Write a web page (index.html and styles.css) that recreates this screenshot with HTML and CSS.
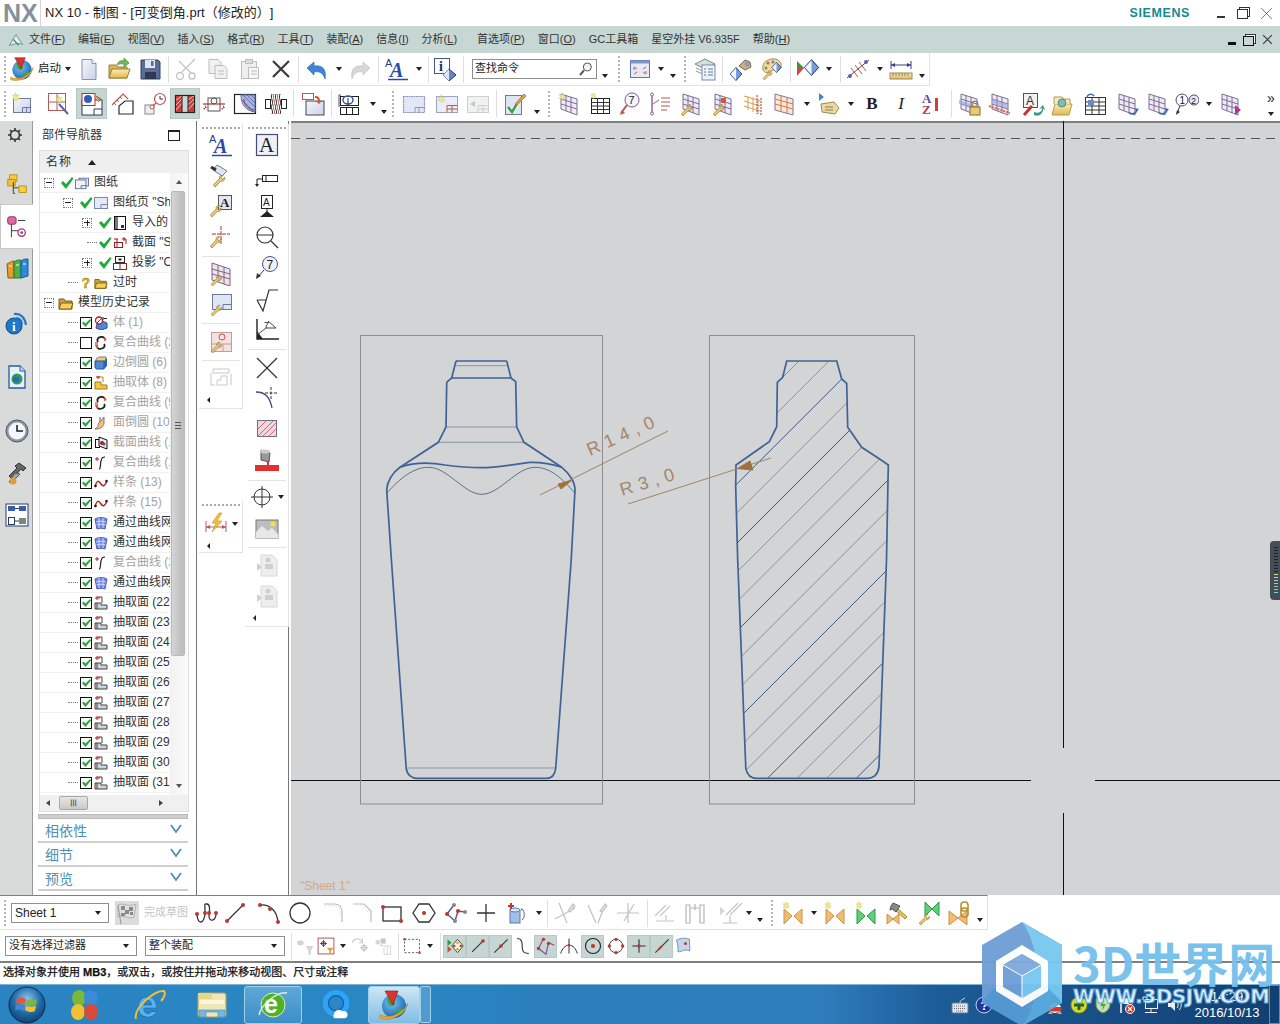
FILE: index.html
```html
<!DOCTYPE html>
<html lang="zh">
<head>
<meta charset="utf-8">
<title>NX 10 - 制图</title>
<link rel="stylesheet" href="styles.css">
</head>
<body>
<svg class="sprite" xmlns="http://www.w3.org/2000/svg">
<defs>
<linearGradient id="gFolder" x1="0" y1="0" x2="0" y2="1"><stop offset="0" stop-color="#fbeeb0"/><stop offset="1" stop-color="#e3b94e"/></linearGradient>
<linearGradient id="gSheet" x1="0" y1="0" x2="1" y2="1"><stop offset="0" stop-color="#f4f6fb"/><stop offset="1" stop-color="#c9d3ea"/></linearGradient>
<radialGradient id="gOrb" cx=".5" cy=".35" r=".7"><stop offset="0" stop-color="#8fc8ec"/><stop offset=".55" stop-color="#1f6aa8"/><stop offset="1" stop-color="#0d3a66"/></radialGradient>
<radialGradient id="gGlobe" cx=".4" cy=".35" r=".7"><stop offset="0" stop-color="#7cc6f2"/><stop offset="1" stop-color="#1560b0"/></radialGradient>
<linearGradient id="gRuler" x1="0" y1="0" x2="0" y2="1"><stop offset="0" stop-color="#fbf2c4"/><stop offset="1" stop-color="#d9b964"/></linearGradient>

<symbol id="wrench" viewBox="0 0 24 24"><path d="M2 21l8-8c-1-3 2-6 5-5l-3 3 2 3 3-3c1 3-2 6-5 5l-8 8z" fill="#ecc973" stroke="#8a6a20" stroke-width=".9"/></symbol>
<symbol id="sheet" viewBox="0 0 24 24"><rect x="3.500" y="6.500" width="17" height="14" fill="url(#gSheet)" stroke="#7078a0"/><path d="M12.500 20.500v-5h8M16.500 15.500v5" fill="none" stroke="#7078a0"/></symbol>
<symbol id="star" viewBox="0 0 24 24"><path d="M8 1l1.500 4 4-1-2 3.500 3 3-4 .2L9 14l-1.500-3.500-4 .5 2.500-3-2.500-3.500 4 1z" fill="#f3ea8a" stroke="#b9b45a" stroke-width=".6"/></symbol>
<symbol id="grid" viewBox="0 0 24 24"><path d="M4 2l16 5v16L4 17z" fill="#efeaf3" stroke="#7a6f98"/><path d="M4 7l16 5M4 12l16 5M9 3.500v15.500M14 5v16" stroke="#7a6f98" fill="none"/></symbol>
<symbol id="new" viewBox="0 0 24 24"><path d="M5 2.500h10l4 4v16H5z" fill="url(#gSheet)" stroke="#8890b8"/><path d="M15 2.500v4h4" fill="#fff" stroke="#8890b8"/></symbol>
<symbol id="open" viewBox="0 0 24 24"><path d="M2 8h7l2 2h9v11H2z" fill="#d9b659" stroke="#98803a"/><path d="M2 21l3-9h18l-3 9z" fill="url(#gFolder)" stroke="#98803a"/><path d="M10 8c1-4 4-5 7-4V1l5 5-5 4V7c-3-.5-5 0-7 1z" fill="#73b85a" stroke="#4a8a3a" stroke-width=".7"/></symbol>
<symbol id="save" viewBox="0 0 24 24"><path d="M3 3h17l2 2v17H3z" fill="#5a6d92" stroke="#33415e"/><rect x="7" y="3" width="10" height="8" fill="#dfe5f1"/><rect x="7" y="15" width="11" height="7" fill="#2e3a55"/><rect x="13" y="4" width="2.500" height="5" fill="#5a6d92"/></symbol>
<symbol id="cut" viewBox="0 0 24 24" fill="none" stroke="#c4c4c4" stroke-width="1.300"><path d="M21 2L8 15M5 4l12 12"/><circle cx="6" cy="19" r="3.500"/><circle cx="18" cy="19" r="3"/></symbol>
<symbol id="copy" viewBox="0 0 24 24" fill="#f1f1f1" stroke="#bdbdbd"><path d="M3 2.500h9l3 3v11H3z"/><path d="M9 8.500h9l3 3v10H9z"/><path d="M12 14h6M12 17h6" /></symbol>
<symbol id="paste" viewBox="0 0 24 24" fill="#eee" stroke="#bdbdbd"><rect x="3.500" y="4.500" width="15" height="17"/><rect x="7.500" y="2.500" width="7" height="4" fill="#ddd"/><path d="M10.500 10.500h10v11h-10z" fill="#f6f6f6"/><path d="M13 14h6M13 17h6"/></symbol>
<symbol id="xmark" viewBox="0 0 24 24"><path d="M4 4l16 16M20 4L4 20" stroke="#3a3a3a" stroke-width="2.200"/></symbol>
<symbol id="undo" viewBox="0 0 24 24"><path d="M2 11l7-6v4c7-1 13 2 11 13-2-6-5-8-11-7v3z" fill="#3d87d6" stroke="#2a5e9e" stroke-width=".6"/></symbol>
<symbol id="redo" viewBox="0 0 24 24"><path d="M22 11l-7-6v4C8 8 2 11 4 22c2-6 5-8 11-7v3z" fill="#d8d8d8" stroke="#bdbdbd" stroke-width=".6"/></symbol>
<symbol id="aa" viewBox="0 0 24 24"><text x="0" y="10" font-family="Liberation Sans" font-size="11" fill="#2d3a8a">A</text><text x="5" y="20" font-family="Liberation Serif" font-size="20" font-style="italic" font-weight="700" fill="#2b47a8">A</text><path d="M3 22.500h20" stroke="#2b47a8" stroke-width="1.500"/></symbol>
<symbol id="info" viewBox="0 0 24 24"><rect x="1.500" y="1.500" width="15" height="15" fill="#fff" stroke="#4a5488"/><text x="6" y="14" font-family="Liberation Serif" font-weight="700" font-size="14" fill="#222a70">i</text><path d="M16 12l7 6-7 6-6-6z" fill="#5f8ac8" stroke="#26346e"/><path d="M16 12v12l-6-6z" fill="#dfe6f3"/></symbol>
<symbol id="fit" viewBox="0 0 24 24"><rect x="2.500" y="3.500" width="19" height="17" fill="#e4ebf7" stroke="#5b74b0"/><path d="M2.500 3.500h19v3h-19z" fill="#7c97cf"/><path d="M6 10l3 2M6 10v3M18 17l-3-2M18 17v-3M18 10l-3 2M6 17l3-2" stroke="#c75a4e" fill="none"/></symbol>
<symbol id="layers" viewBox="0 0 24 24"><path d="M2 7l10-5 10 5-10 5z" fill="#cfe3d9" stroke="#7b8a86"/><path d="M3 11l9 4 9-4M3 14l9 4 9-4" fill="none" stroke="#8b9a96"/><rect x="9" y="8" width="13" height="15" fill="#eef3f6" stroke="#7c8ab0"/><path d="M11 12h2M15 12h5M11 15h2M15 15h5M11 18h2M15 18h5" stroke="#6272a8"/></symbol>
<symbol id="diamond" viewBox="0 0 24 24"><path d="M12 1l10 11-10 11L2 12z" fill="#7a9fd8" stroke="#2a3a78" stroke-width="1.200"/><path d="M12 1v22L2 12z" fill="#f1f4fa"/><path d="M12 1l10 11-10 11L2 12z" fill="none" stroke="#2a3a78"/></symbol>
<symbol id="dpaint" viewBox="0 0 24 24"><use href="#diamond" x="0" y="10" width="14" height="14"/><path d="M10 9l6-6 5 2 1 5-6 3z" fill="#d0b080" stroke="#7a6a50"/><circle cx="18" cy="7" r="2.500" fill="#8a9cc8"/></symbol>
<symbol id="palw" viewBox="0 0 24 24"><path d="M12 2c7-1 11 3 10 8-1 4-5 3-7 3-3 0-3 3-5 3-5 0-7-3-6-7 .5-4 4-6 8-7z" fill="#f0d9a0" stroke="#a88a50"/><circle cx="9" cy="6" r="1.500" fill="#d8554a"/><circle cx="14" cy="5" r="1.500" fill="#4a8ad0"/><circle cx="7" cy="11" r="1.500" fill="#5aa85a"/><use href="#wrench" x="3" y="9" width="14" height="14"/><use href="#diamond" x="12" y="5" width="11" height="11"/></symbol>
<symbol id="pdiamond" viewBox="0 0 24 24"><path d="M1 4l7 7H1z" fill="#2e9a4e"/><path d="M1 11h7l-7 8z" fill="#d8453a"/><use href="#diamond" x="7" y="2" width="17" height="17"/></symbol>
<symbol id="rline" viewBox="0 0 24 24"><path d="M1 21L23 3" stroke="#555" stroke-width="1"/><path d="M5 11l7 9M9 8l7 9M13 5l7 9" stroke="#c3524a"/><circle cx="4" cy="19" r="2" fill="#5a64a8"/><circle cx="20" cy="5" r="2" fill="#5a64a8"/></symbol>
<symbol id="rulerd" viewBox="0 0 24 24"><path d="M2 8h20M2 4v8M22 4v8" stroke="#3a3a90" fill="none"/><path d="M2 8l4-2v4zM22 8l-4-2v4z" fill="#3a3a90"/><rect x="1" y="16" width="22" height="6" fill="url(#gRuler)" stroke="#a08a50"/><path d="M4 16v3M7 16v3M10 16v3M13 16v3M16 16v3M19 16v3" stroke="#8a7a50"/></symbol>
<symbol id="searchi" viewBox="0 0 24 24"><circle cx="14" cy="9" r="6" fill="#f4f4f4" stroke="#555" stroke-width="1.500"/><path d="M9 14l-6 7" stroke="#555" stroke-width="3"/></symbol>

<symbol id="s0" viewBox="0 0 24 24"><path d="M2 20L12 4l10 15c-5-3-9-2-20 1z" fill="#e2f0e4" stroke="#4a6a8a"/><path d="M8 11l8 9" stroke="#2e9a4e" stroke-width="2"/></symbol>
<symbol id="s1" viewBox="0 0 24 24"><use href="#sheet"/><use href="#star" x="0" y="0" width="16" height="16"/></symbol>
<symbol id="s2" viewBox="0 0 24 24"><rect x="1.500" y="1.500" width="17" height="17" fill="#fff" stroke="#b05a5a"/><path d="M10 1.500v17M1.500 10h17" stroke="#b05a5a"/><path d="M12 12l9 10" stroke="#5a64a8" stroke-width="2"/><use href="#star" x="7" y="3" width="14" height="14"/></symbol>
<symbol id="s3" viewBox="0 0 24 24"><rect x="2" y="8" width="20" height="15" fill="#fff" stroke="#2e3a58"/><path d="M14 23v-6h8" stroke="#2e3a58" fill="none"/><rect x="2" y="1.500" width="13" height="12" fill="#fff" stroke="#c02a2a"/><circle cx="8" cy="7" r="4" fill="#2d5fb8"/><path d="M16 4l5 3-3 3" fill="#e0904a" stroke="#a05a2a"/></symbol>
<symbol id="s4" viewBox="0 0 24 24"><path d="M1 13L12 2l5 5" fill="none" stroke="#c2554e" stroke-width="1.200"/><path d="M3 11l2 2M6 8l2 2M9 5l2 2" stroke="#c2554e"/><path d="M8 22V14l6-5h8v13z" fill="#fff" stroke="#2e2e2e" stroke-width="1.200"/></symbol>
<symbol id="s5" viewBox="0 0 24 24"><rect x="2" y="13" width="9" height="9" fill="#eee" stroke="#888"/><circle cx="17" cy="7" r="5.500" fill="#fff" stroke="#c2554e" stroke-width="1.200"/><path d="M17 4v3h3" stroke="#2e2e2e" fill="none"/><path d="M13 11l-5 5" stroke="#c2554e" stroke-width="1.200"/><circle cx="9" cy="15" r="2" fill="#fff" stroke="#c2554e"/></symbol>
<symbol id="s6" viewBox="0 0 24 24"><rect x="2.500" y="3.500" width="19" height="17" fill="#c9d7d5" stroke="#222" stroke-width="1.200"/><rect x="3" y="4" width="6" height="16" fill="#d03a3a"/><rect x="15" y="4" width="6" height="16" fill="#d03a3a"/><path d="M3 8l6-4M3 13l6-6M3 18l6-7M15 8l6-4M15 13l6-6M15 18l6-7" stroke="#fff" stroke-width=".7"/><path d="M9 3.500v17M15 3.500v17" stroke="#222"/></symbol>
<symbol id="s7" viewBox="0 0 24 24"><rect x="6" y="6" width="12" height="13" fill="#fff" stroke="#555"/><circle cx="12" cy="9" r="3" fill="none" stroke="#555"/><path d="M1 12h22" stroke="#a33" stroke-width="1.200"/><path d="M3 13v5l-2-2h4zM21 13v5l-2-2h4z" fill="#c33"/></symbol>
<symbol id="s8" viewBox="0 0 24 24"><rect x="1.500" y="2.500" width="21" height="19" fill="#fff" stroke="#222" stroke-width="1.200"/><path d="M8 3c0 10 5 16 14 17V3z" fill="#a7b6dc" stroke="#6070a8"/><path d="M10 3l12 12M14 3l8 8M9 8l12 12M18 3l4 4" stroke="#6070a8"/><path d="M11 7c0 6 4 10 10 11" fill="none" stroke="#a33"/></symbol>
<symbol id="s9" viewBox="0 0 24 24"><rect x="1.500" y="7.500" width="5" height="9" fill="#fff" stroke="#222"/><rect x="17.500" y="7.500" width="5" height="9" fill="#fff" stroke="#222"/><path d="M8 2c-2 5 2 7 0 11s2 6 0 9M12 2c-2 5 2 7 0 11s2 6 0 9M16 2c-2 5 2 7 0 11s2 6 0 9" fill="none" stroke="#222"/><path d="M10 2c-2 5 2 7 0 11s2 6 0 9M14 2c-2 5 2 7 0 11s2 6 0 9" fill="none" stroke="#b55"/></symbol>
<symbol id="s10" viewBox="0 0 24 24"><rect x="5" y="9" width="18" height="14" fill="url(#gSheet)" stroke="#444"/><rect x="1.500" y="1.500" width="11" height="6" fill="#fff" stroke="#c2554e"/><path d="M14 4c3 0 5 1 5 5h2l-3 3-3-3h2c0-2-1-3-3-3z" fill="#d8553a"/></symbol>
<symbol id="s11" viewBox="0 0 24 24"><path d="M2 15V3M2 3h2" stroke="#555"/><rect x="3.500" y="15.500" width="18" height="7" fill="#fff" stroke="#222"/><path d="M9.500 15.500v7M15.500 15.500v7" stroke="#222"/><rect x="3.500" y="4.500" width="18" height="9" fill="#fff" stroke="#222"/><ellipse cx="11" cy="8" rx="5" ry="4" fill="none" stroke="#3a5aa8" stroke-width="1.500"/><path d="M11 6v7" stroke="#222"/></symbol>
<symbol id="s12" viewBox="0 0 24 24"><rect x="1.500" y="4.500" width="21" height="16" fill="#e2e7f3" stroke="#8d99bd" stroke-width="1.200" stroke-dasharray="2 .5"/><path d="M13 20.500v-5h9.500M17 15.500v5" fill="none" stroke="#8d99bd"/></symbol>
<symbol id="s13" viewBox="0 0 24 24"><rect x="1.500" y="4.500" width="21" height="16" fill="#e9edf6" stroke="#9aa4c0"/><path d="M12 20.500v-7h10.500M12 17h10.500M17 13.500v7" fill="none" stroke="#c2554e"/><use href="#star" x="1" y="2" width="15" height="15"/></symbol>
<symbol id="s14" viewBox="0 0 24 24"><rect x="1.500" y="4.500" width="21" height="16" fill="#f1f1f1" stroke="#cfcfcf"/><path d="M12 20.500v-7h10.500M17 13.500v7M12 17h10.500" fill="none" stroke="#cfcfcf"/><path d="M4 12l5-3v6z" fill="#bfcabf"/></symbol>
<symbol id="s15" viewBox="0 0 24 24"><rect x="2.500" y="3.500" width="16" height="19" fill="#dfe6f3" stroke="#7078a0"/><path d="M5 15l4 5 6-10" fill="none" stroke="#2f9e3f" stroke-width="2.200"/><path d="M13 11l8-9 2 2-9 9-2 .5z" fill="#e8a13a" stroke="#8a5a1a" stroke-width=".6"/></symbol>

<symbol id="t1" viewBox="0 0 24 24"><use href="#grid"/><use href="#star" x="0" y="0" width="14" height="14"/></symbol>
<symbol id="t2" viewBox="0 0 24 24"><rect x="3.500" y="6.500" width="18" height="15" fill="#fff" stroke="#222"/><path d="M3.500 10.500h18M3.500 14h18M3.500 17.500h18M9.500 6.500v15M15.500 6.500v15" stroke="#333"/><use href="#star" x="1" y="0" width="12" height="12"/></symbol>
<symbol id="t3" viewBox="0 0 24 24"><circle cx="14" cy="8" r="7" fill="#f4f4fb" stroke="#7a5a9a"/><text x="10.500" y="12" font-family="Liberation Sans" font-size="11" fill="#222">7</text><path d="M9 13l-6 8" stroke="#c2554e" stroke-width="2"/><path d="M2 23l2-5 3 3z" fill="#c2554e"/></symbol>
<symbol id="t4" viewBox="0 0 24 24"><path d="M4 3v18" stroke="#8a5aa8" stroke-width="1.400"/><circle cx="4" cy="2.500" r="1.500" fill="#fff" stroke="#8a5aa8"/><circle cx="4" cy="21.500" r="1.500" fill="#fff" stroke="#8a5aa8"/><path d="M5 12l6-4" stroke="#c2554e"/><path d="M13 6h9M13 10h9M13 14h9M13 18h6" stroke="#c2554e" stroke-width="1.200"/></symbol>
<symbol id="t5" viewBox="0 0 24 24"><use href="#grid"/><use href="#wrench" x="1" y="7" width="17" height="17"/></symbol>
<symbol id="t6" viewBox="0 0 24 24"><use href="#t5"/><rect x="10" y="6" width="5" height="5" fill="#d8553a"/></symbol>
<symbol id="t7" viewBox="0 0 24 24"><path d="M3 5l15 4v13" fill="none"/><path d="M2 4l16 5M2 9l16 5M2 14l16 5M6 4v14M11 5v15M16 7v15" stroke="#d8a04a"/><path d="M15 3v19M19 6v18" stroke="#a33" stroke-dasharray="2 1"/></symbol>
<symbol id="t8" viewBox="0 0 24 24"><path d="M3 2l18 5v16L3 18z" fill="#f7ebd8" stroke="#8a6fa8"/><path d="M3 7l18 5M3 12l18 5M9 4v15M15 5.500v16" stroke="#d8754a"/></symbol>
<symbol id="t9" viewBox="0 0 24 24"><path d="M3 1l5 4-5 4z" fill="#3a8ac8"/><path d="M5 12l13-2 5 6-4 6-13-2z" fill="#ecd9a0" stroke="#a08a50"/><path d="M9 15h8M9 18h8" stroke="#8a7a50"/></symbol>
<symbol id="t10" viewBox="0 0 24 24"><use href="#grid"/><path d="M2 8l18 6v4L2 12z" fill="#9aa4dc" opacity=".7"/><rect x="13" y="15" width="10" height="8" fill="#ecc973" stroke="#8a6a20"/><path d="M15 15v-3a3 3 0 0 1 6 0v3" fill="none" stroke="#8a6a20"/></symbol>
<symbol id="t11" viewBox="0 0 24 24"><use href="#grid"/><path d="M4 7l16 5v4L4 11z" fill="#9aa4dc" opacity=".7"/><path d="M1 14l21 7" stroke="#d8704a" stroke-width="2" stroke-dasharray="2 1"/></symbol>
<symbol id="t12" viewBox="0 0 24 24"><rect x="2.500" y="1.500" width="14" height="14" fill="#f1f1f1" stroke="#555"/><text x="5" y="13" font-family="Liberation Sans" font-size="12" fill="#333">A</text><path d="M3 23l8-9" stroke="#c2352e" stroke-width="3"/><path d="M13 20c6 2 8-1 8-4l-3 1 4-4 2 5-2-1c0 5-4 8-9 6z" fill="#3a9a8a"/></symbol>
<symbol id="t13" viewBox="0 0 24 24"><path d="M2 23l3-11h17l-3 11z" fill="url(#gFolder)" stroke="#b39a50"/><path d="M4 12V5h8l2 2h6v5" fill="#f5e9bd" stroke="#b39a50"/><circle cx="12" cy="11" r="4" fill="#7cc0a0" stroke="#4a8aa8"/></symbol>
<symbol id="t14" viewBox="0 0 24 24"><rect x="2.500" y="5.500" width="20" height="17" fill="#fff" stroke="#333"/><path d="M2.500 10h20M2.500 14h20M2.500 18h20M9 5.500v17M16 5.500v17" stroke="#333"/><path d="M4 6c0-4 5-5 7-2" fill="none" stroke="#4a6ab0" stroke-width="1.400"/><rect x="5" y="8" width="6" height="5" fill="#6a8ac8"/></symbol>
<symbol id="t15" viewBox="0 0 24 24"><use href="#grid"/><path d="M14 21c4 2 8 0 8-4" fill="none" stroke="#3a6ab0" stroke-width="1.600"/><path d="M20 16l4 1-3 3z" fill="#3a6ab0"/></symbol>
<symbol id="t16" viewBox="0 0 24 24"><circle cx="7" cy="8" r="6" fill="#fff" stroke="#4a4a7a"/><circle cx="19" cy="8" r="5" fill="#e9e9f3" stroke="#4a4a7a"/><text x="4.500" y="12" font-family="Liberation Sans" font-size="10" fill="#222">1</text><text x="16" y="11.500" font-family="Liberation Sans" font-size="9" fill="#222">2</text><path d="M5 14l-3 7" stroke="#333"/><path d="M1 23l1-5 3 2z" fill="#333"/></symbol>
<symbol id="t17" viewBox="0 0 24 24"><use href="#grid"/><path d="M17 13l6 5-6 5z" fill="#b0358a"/></symbol>

<symbol id="flag" viewBox="0 0 24 24"><path d="M3 4c6-3 10 3 18-1l-2 13c-6 3-11-3-16 0z" fill="#e0e0e0" stroke="#b0b0b0"/><path d="M6 5h4v4H6zM14 6h4v4h-4zM10 9h4v4h-4zM6 12h4v3H6zM15 11h3v3h-3z" fill="#8a8a8a"/><path d="M3 4l3 19" stroke="#999"/></symbol>
<symbol id="spl" viewBox="0 0 24 24"><path d="M3 12c0 14 8 10 8 0s-1-9 2-9 3 6 2 12c0 6 7 6 7-3" fill="none" stroke="#333" stroke-width="1.300"/><circle cx="3" cy="13" r="2" fill="#c0352e"/><circle cx="11" cy="12" r="2" fill="#c0352e"/><circle cx="15" cy="12" r="2" fill="#c0352e"/><circle cx="22" cy="12" r="2" fill="#c0352e"/></symbol>
<symbol id="lin" viewBox="0 0 24 24"><path d="M4 20L20 4" stroke="#333" stroke-width="1.300"/><circle cx="4" cy="20" r="2" fill="#c0352e"/><circle cx="20" cy="4" r="2" fill="#c0352e"/></symbol>
<symbol id="arc" viewBox="0 0 24 24"><path d="M3 4c10-1 17 6 18 17" fill="none" stroke="#333" stroke-width="1.300"/><circle cx="3" cy="4" r="2" fill="#c0352e"/><circle cx="13" cy="8" r="2" fill="#c0352e"/><circle cx="21" cy="21" r="2" fill="#c0352e"/></symbol>
<symbol id="cir" viewBox="0 0 24 24"><circle cx="12" cy="12" r="10" fill="none" stroke="#333" stroke-width="1.300"/></symbol>
<symbol id="fil" viewBox="0 0 24 24"><path d="M3 3h10c5 0 8 3 8 8v10" fill="none" stroke="#bbb" stroke-width="1.200"/><path d="M3 5h10c4 0 6 3 6 6v4" fill="none" stroke="#ddd" stroke-dasharray="1 1"/></symbol>
<symbol id="chm" viewBox="0 0 24 24"><path d="M3 3h11l7 7v11" fill="none" stroke="#bbb" stroke-width="1.200"/><path d="M10 3l11 11" stroke="#ddd" stroke-dasharray="1 1"/></symbol>
<symbol id="rct" viewBox="0 0 24 24"><rect x="3" y="6" width="18" height="14" fill="none" stroke="#333" stroke-width="1.300"/><circle cx="3" cy="6" r="2" fill="#c0352e"/><circle cx="21" cy="20" r="2" fill="#c0352e"/></symbol>
<symbol id="hex" viewBox="0 0 24 24"><path d="M7 3h10l6 9-6 9H7l-6-9z" fill="none" stroke="#333" stroke-width="1.300"/><circle cx="12" cy="12" r="2" fill="#c0352e"/></symbol>
<symbol id="pro" viewBox="0 0 24 24"><path d="M10 4l-7 9 8 7 3-10 7 1" fill="none" stroke="#5a5a8a" stroke-width="1.500"/><circle cx="10" cy="4" r="2" fill="#888"/><circle cx="3" cy="13" r="2" fill="#c0352e"/><circle cx="11" cy="20" r="2" fill="#888"/><circle cx="14" cy="10" r="2" fill="#c0352e"/><circle cx="21" cy="11" r="2" fill="#888"/></symbol>
<symbol id="cro" viewBox="0 0 24 24"><path d="M12 3v18M3 12h18" stroke="#333" stroke-width="1.300"/></symbol>
<symbol id="cyl" viewBox="0 0 24 24"><rect x="6" y="9" width="10" height="13" fill="#9fc0e4" stroke="#5a7aa8"/><ellipse cx="11" cy="9" rx="5" ry="2" fill="#d8e6f4" stroke="#5a7aa8"/><path d="M4 5h6M7 2v6" stroke="#c0352e" stroke-width="2"/><path d="M18 8c3 2 3 9 0 11" fill="none" stroke="#5a5aa8"/><path d="M17 8l1-1v3z" fill="#c0352e"/></symbol>
<symbol id="g1" viewBox="0 0 24 24" fill="none" stroke="#c2c2c2" stroke-width="1.200"><path d="M6 2l8 20M22 7L2 18"/><path d="M15 10l5-7 2 2-5 6z" fill="#e5e5e5"/></symbol>
<symbol id="g2" viewBox="0 0 24 24" fill="none" stroke="#c2c2c2" stroke-width="1.200"><path d="M3 4l8 18M20 4l-7 18"/><path d="M15 10l5-7 2 2-5 6z" fill="#e5e5e5"/></symbol>
<symbol id="g3" viewBox="0 0 24 24" fill="none" stroke="#c2c2c2" stroke-width="1.200"><path d="M1 12h22M12 2v20M18 3L8 20"/></symbol>
<symbol id="g4" viewBox="0 0 24 24" fill="none" stroke="#c8c8c8" stroke-width="1.200"><path d="M2 15L13 4M7 15L17 5M3 20h18M13 20v-6"/></symbol>
<symbol id="g5" viewBox="0 0 24 24" fill="none" stroke="#b5b5b5" stroke-width="1.200"><path d="M3 4h4v18H3zM17 4h4v18h-4zM8 7h8M12 3v6"/></symbol>
<symbol id="g6" viewBox="0 0 24 24" fill="none" stroke="#c2c2c2" stroke-width="1.200"><path d="M7 14L19 2M11 14L23 2M4 22h14M11 22v-7"/><path d="M1 6l5 4-5 4z" fill="#d5d5d5" stroke="none"/></symbol>
<symbol id="bow" viewBox="0 0 24 24"><path d="M3 8l8 7-8 8zM21 8l-8 7 8 8z" fill="#f2bb77" stroke="#d09040"/></symbol>
<symbol id="b1" viewBox="0 0 24 24"><use href="#bow"/><use href="#star" x="0" y="0" width="14" height="14"/></symbol>
<symbol id="b3" viewBox="0 0 24 24"><path d="M3 8l8 7-8 8zM21 8l-8 7 8 8z" fill="#5ed07a" stroke="#2a9a4a"/><use href="#star" x="0" y="0" width="14" height="14"/></symbol>
<symbol id="b4" viewBox="0 0 24 24"><path d="M2 13l6 5-6 5zM14 13l-6 5 6 5z" fill="#f2bb77" stroke="#d09040"/><path d="M11 6l11 10-2 2L9 8z" fill="#e8c468" stroke="#a8842a"/><path d="M8 2l7 3-4 6-4-3-2 1 1-4z" fill="#8a8a8a" stroke="#555"/></symbol>
<symbol id="b5" viewBox="0 0 24 24"><path d="M8 1l7 7 7-7v14l-7-7-7 7z" fill="#5ed07a" stroke="#2a9a4a"/><use href="#wrench" x="1" y="8" width="16" height="16"/></symbol>
<symbol id="b6" viewBox="0 0 24 24"><path d="M1 10l9 7-9 7zM19 10l-9 7 9 7z" fill="#f2bb77" stroke="#d09040"/><rect x="13" y="1" width="7" height="9" rx="3" fill="none" stroke="#b8902a" stroke-width="1.600"/><rect x="13" y="7" width="7" height="9" rx="3" fill="none" stroke="#b8902a" stroke-width="1.600"/></symbol>

<symbol id="f1" viewBox="0 0 24 24"><path d="M2 8c2-4 7-4 9 0l-2 3H4z" fill="#d5d5d5"/><path d="M13 12h9l-3 6v4l-3 1v-5z" fill="#d5d5d5"/></symbol>
<symbol id="f2" viewBox="0 0 24 24"><rect x="2.500" y="2.500" width="19" height="19" fill="#fff" stroke="#a03a3a"/><path d="M9 5v8M5 9h8" stroke="#333"/><circle cx="9" cy="9" r="2.500" fill="none" stroke="#333"/><path d="M13 14h8l-3 4v4l-2-1v-3z" fill="#e8a13a"/></symbol>
<symbol id="f3" viewBox="0 0 24 24" fill="none" stroke="#c5c5c5" stroke-width="1.300"><path d="M3 8c1-5 8-6 11-2"/><path d="M12 14h10M17 9v10"/><circle cx="17" cy="14" r="3"/><path d="M15 3v5h-4"/></symbol>
<symbol id="f4" viewBox="0 0 24 24"><rect x="2" y="5" width="5" height="5" fill="#d5d5d5"/><rect x="8" y="3" width="6" height="6" fill="#c5c5c5"/><path d="M12 12h8v10h-8zM16 12v10" fill="none" stroke="#d0d0d0"/><path d="M6 12l3-2 3 2" fill="#d5d5d5"/></symbol>
<symbol id="sel" viewBox="0 0 24 24"><rect x="3" y="4" width="18" height="16" fill="none" stroke="#444" stroke-dasharray="2.500 2"/><circle cx="3" cy="4" r="1.500" fill="#c0352e"/><circle cx="21" cy="20" r="1.500" fill="#c0352e"/></symbol>
<symbol id="sn1" viewBox="0 0 24 24"><path d="M3 4l5 4-5 4z" fill="#2e9a4e"/><path d="M3 12l5 4-5 4z" fill="#d8453a"/><path d="M15 4l7 8-7 8-7-8z" fill="#f4f4d8" stroke="#333"/><circle cx="15" cy="8" r="1.500" fill="#d8a020"/><circle cx="11" cy="12" r="1.500" fill="#c0352e"/><circle cx="19" cy="12" r="1.500" fill="#c0352e"/><circle cx="15" cy="16" r="1.500" fill="#d8a020"/></symbol>
<symbol id="sn2" viewBox="0 0 24 24"><path d="M5 19L19 5" stroke="#333" stroke-width="1.300"/><circle cx="18" cy="6" r="2.200" fill="#c0352e"/></symbol>
<symbol id="sn3" viewBox="0 0 24 24"><path d="M4 20L20 4" stroke="#333" stroke-width="1.300"/><circle cx="12" cy="12" r="2.200" fill="#c0352e"/></symbol>
<symbol id="sn4" viewBox="0 0 24 24"><path d="M5 3c6 0 6 5 6 9s0 9 8 9" fill="none" stroke="#333" stroke-width="1.300"/></symbol>
<symbol id="sn5" viewBox="0 0 24 24"><path d="M9 3l-6 12 9 7 3-14 7 3" fill="none" stroke="#8a4aa8" stroke-width="1.400"/><circle cx="9" cy="4" r="2" fill="#c0352e"/><circle cx="3" cy="15" r="2" fill="#c0352e"/><circle cx="15" cy="9" r="2" fill="#c0352e"/></symbol>
<symbol id="sn6" viewBox="0 0 24 24"><path d="M2 21c2-6 5-10 10-10s8 4 10 10M12 3v18" fill="none" stroke="#333" stroke-width="1.200"/><circle cx="12" cy="11" r="1.500" fill="#c0352e"/></symbol>
<symbol id="sn7" viewBox="0 0 24 24"><circle cx="12" cy="12" r="9" fill="none" stroke="#222" stroke-width="1.300"/><circle cx="12" cy="12" r="2.500" fill="#c0352e"/></symbol>
<symbol id="sn8" viewBox="0 0 24 24"><circle cx="12" cy="12" r="8" fill="none" stroke="#444" stroke-width="1.200"/><circle cx="12" cy="4" r="2" fill="#c0352e"/><circle cx="12" cy="20" r="2" fill="#c0352e"/><circle cx="4" cy="12" r="2" fill="#c0352e"/><circle cx="20" cy="12" r="2" fill="#c0352e"/></symbol>
<symbol id="sn9" viewBox="0 0 24 24"><path d="M4 12h16M12 4v16" stroke="#333" stroke-width="1.300"/><circle cx="12" cy="12" r="2" fill="#c0352e"/></symbol>
<symbol id="sn10" viewBox="0 0 24 24"><path d="M4 20L20 4" stroke="#333" stroke-width="1.300"/><path d="M8 16l4-4" stroke="#c0352e" stroke-width="2.400"/></symbol>
<symbol id="sn11" viewBox="0 0 24 24"><path d="M4 5c6-3 11-3 16-1-1 5 1 10 0 14-6-3-9 1-14 1C6 14 6 9 4 5z" fill="#c4d6ea" stroke="#6a82a8"/><circle cx="15" cy="9" r="1.800" fill="#c0352e"/></symbol>

<symbol id="pw1" viewBox="0 0 24 24"><use href="#wrench" x="2" y="6" width="20" height="18"/><path d="M4 7l4-5 10 6-5 5z" fill="#dfe6f3" stroke="#7078a0"/><path d="M2 4l5 3" stroke="#333" stroke-width="3"/></symbol>
<symbol id="pw2" viewBox="0 0 24 24"><rect x="9.500" y="1.500" width="13" height="14" fill="#e2e7f3" stroke="#555"/><text x="11" y="13" font-family="Liberation Serif" font-size="13" font-weight="700" fill="#222">A</text><use href="#wrench" x="0" y="6" width="17" height="17"/></symbol>
<symbol id="pw3" viewBox="0 0 24 24"><path d="M12 1v18M3 9h18" stroke="#a33" stroke-width="1" stroke-dasharray="4 1"/><use href="#wrench" x="0" y="6" width="17" height="17"/></symbol>
<symbol id="pw4" viewBox="0 0 24 24"><path d="M3 1l18 6v17L3 18z" fill="#efe6dc" stroke="#7a5fa0"/><path d="M3 7l18 5M3 12l18 5M9 3v16M15 5v17" stroke="#7a5fa0"/><use href="#wrench" x="1" y="8" width="16" height="16"/></symbol>
<symbol id="pw5" viewBox="0 0 24 24"><rect x="3.500" y="1.500" width="19" height="15" fill="#dfe6f3" stroke="#7078a0"/><path d="M14 16.500v-5h8.500" fill="none" stroke="#7078a0"/><use href="#wrench" x="1" y="7" width="16" height="16"/></symbol>
<symbol id="pw6" viewBox="0 0 24 24"><rect x="2.500" y="2.500" width="20" height="19" fill="#f5e2e0" stroke="#c79a9a"/><path d="M2.500 14h20M14 14v7.500" stroke="#c79a9a"/><circle cx="13" cy="7" r="3" fill="none" stroke="#c2554e"/><use href="#wrench" x="1" y="7" width="16" height="16"/></symbol>
<symbol id="pd1" viewBox="0 0 24 24" fill="none" stroke="#c8c8c8"><path d="M2 8v12h4M4 4h16v4H4zM8 20h10v-9H12v4H8zM22 9v11"/></symbol>
<symbol id="flash" viewBox="0 0 24 24"><path d="M2 9v11M22 9v11M2 15h20" stroke="#b85a5a"/><path d="M2 15l4-2v4zM22 15l-4-2v4z" fill="#b85a5a"/><path d="M15 1l-7 10h4l-4 9 10-11h-5l5-8z" fill="#f2c232" stroke="#c0902a" stroke-width=".6"/></symbol>
<symbol id="bigA" viewBox="0 0 24 24"><rect x="1.500" y="1.500" width="21" height="21" fill="#eef1f8" stroke="#4a4a7a" stroke-width="1.200"/><text x="4" y="19" font-family="Liberation Serif" font-size="21" fill="#222">A</text></symbol>
<symbol id="leader" viewBox="0 0 24 24"><rect x="7.500" y="7.500" width="15" height="6" fill="#fff" stroke="#222"/><path d="M11 7.500v6" stroke="#222"/><path d="M7 11H2v5" fill="none" stroke="#222"/><path d="M0 16h4l-2 3z" fill="#222"/></symbol>
<symbol id="datum" viewBox="0 0 24 24"><rect x="6.500" y="1.500" width="11" height="13" fill="#fff" stroke="#222"/><text x="8" y="12" font-family="Liberation Sans" font-size="10" fill="#222">A</text><path d="M12 14v4" stroke="#222"/><path d="M5 23l7-6 7 6z" fill="#222"/></symbol>
<symbol id="zoomm" viewBox="0 0 24 24"><circle cx="10" cy="10" r="8" fill="none" stroke="#333" stroke-width="1.200"/><path d="M2 10h16M16 16l7 7" stroke="#333" stroke-width="1.200"/></symbol>
<symbol id="ball7" viewBox="0 0 24 24"><circle cx="15" cy="8" r="7.500" fill="#eef0fa" stroke="#5a4a9a"/><text x="11.500" y="13" font-family="Liberation Sans" font-size="12" fill="#222">7</text><path d="M9 14L2 22" stroke="#333"/><path d="M1 23l1-6 4 3z" fill="#333"/></symbol>
<symbol id="sqrt" viewBox="0 0 24 24"><path d="M2 12l6 11L14 2h9" fill="none" stroke="#333" stroke-width="1.200"/><path d="M2 12h9" stroke="#333"/></symbol>
<symbol id="angl" viewBox="0 0 24 24"><path d="M2 1v20h22" fill="none" stroke="#222" stroke-width="1.400"/><path d="M2 21h6l-6-8z" fill="#222"/><path d="M2 17l9-7 10 0-8-7" fill="none" stroke="#444"/><text x="9" y="10" font-family="Liberation Sans" font-size="9" fill="#222">7</text></symbol>
<symbol id="xl" viewBox="0 0 24 24"><path d="M2 2l20 20M22 2L2 22" stroke="#333" stroke-width="1.200"/></symbol>
<symbol id="fcross" viewBox="0 0 24 24"><path d="M1 6c10 0 14 6 16 16" fill="none" stroke="#444a78" stroke-width="1.300"/><path d="M16 1v12M10 7h12" stroke="#333" stroke-dasharray="3 1.500"/></symbol>
<symbol id="hatch" viewBox="0 0 24 24"><rect x="2.500" y="3.500" width="19" height="16" fill="#eed8dc" stroke="#7a6a8a"/><path d="M3 12l8-8M3 19l15-15M8 19L21 6M14 19l7-7" stroke="#c86a7a"/></symbol>
<symbol id="paint" viewBox="0 0 24 24"><path d="M6 2l9 3-1 9-8-2z" fill="#999" stroke="#555"/><ellipse cx="10" cy="3.500" rx="5" ry="2" fill="#ccc"/><path d="M13 14v3" stroke="#d8352e" stroke-width="2"/><rect x="0" y="17" width="24" height="6" fill="#e03030"/></symbol>
<symbol id="ch" viewBox="0 0 24 24"><circle cx="12" cy="12" r="8" fill="none" stroke="#333"/><path d="M12 1v22M1 12h22" stroke="#333"/></symbol>
<symbol id="imgi" viewBox="0 0 24 24"><rect x="1" y="3" width="22" height="18" fill="#bdbdbd" stroke="#777"/><path d="M1 15l6-6 6 5 4-3 6 6v4H1z" fill="#e8e8e8"/><circle cx="18" cy="7" r="2.500" fill="#f2e24a"/></symbol>
<symbol id="grayd" viewBox="0 0 24 24"><path d="M6 1h11l5 5v16H6z" fill="#eee" stroke="#d8d8d8"/><path d="M2 9l5 4-5 4z" fill="#cfcfcf"/><circle cx="13" cy="6" r="2.500" fill="#cfcfcf"/><rect x="10" y="10" width="8" height="5" fill="#cfcfcf"/></symbol>

<symbol id="ck" viewBox="0 0 14 14"><path d="M1 7l2-2 3 3 6-7 1.500 1.500L6 13z" fill="#23a83a"/></symbol>
<symbol id="box" viewBox="0 0 14 14"><rect x="1.500" y="1.500" width="11" height="11" fill="#fff" stroke="#111"/><path d="M3 7l1.500-1.500 2 2L11 3l1 1.500L6.500 11z" fill="#23a83a"/></symbol>
<symbol id="boxe" viewBox="0 0 14 14"><rect x="1.500" y="1.500" width="11" height="11" fill="#fff" stroke="#111"/></symbol>
<symbol id="tfolder" viewBox="0 0 16 14"><path d="M1 3h5l1 2h7v8H1z" fill="#c9a23a" stroke="#7a5f14"/><path d="M1 13l2-6h12l-2 6z" fill="#f6d05a" stroke="#7a5f14"/></symbol>
<symbol id="tsheets" viewBox="0 0 16 14"><rect x="4.500" y="1.500" width="11" height="9" fill="#dfe6f3" stroke="#5c6a8c"/><rect x=".5" y="3.500" width="12" height="10" fill="#eef2fa" stroke="#5c6a8c"/><path d="M7 13v-3h5.500" fill="none" stroke="#5c6a8c"/></symbol>
<symbol id="tsheet" viewBox="0 0 14 14"><rect x=".5" y="1.500" width="13" height="11" fill="#e4eaf5" stroke="#7c88a8"/><path d="M7 12.500v-4h6.500" fill="none" stroke="#7c88a8"/></symbol>
<symbol id="timp" viewBox="0 0 14 14"><rect x="1.500" y=".5" width="11" height="13" fill="#777" stroke="#111"/><rect x="5" y="1" width="7" height="12" fill="#fff"/><rect x="8" y="9" width="3" height="3" fill="#333"/></symbol>
<symbol id="tsec" viewBox="0 0 14 14"><rect x="1.500" y="6.500" width="8" height="5" fill="none" stroke="#a01818"/><path d="M4 3v8M1 3h4M9 3h4v5M11 1v4" stroke="#a01818" fill="none"/></symbol>
<symbol id="tpro" viewBox="0 0 14 14"><rect x="2.500" y=".5" width="9" height="6" fill="#fff" stroke="#222"/><rect x="5.500" y="2.500" width="3" height="2" fill="#222"/><rect x=".5" y="7.500" width="13" height="6" fill="#fff" stroke="#a01818"/><path d="M7 7.500v6" stroke="#a01818"/></symbol>
<symbol id="tq" viewBox="0 0 12 14"><text x="1.500" y="12" font-family="Liberation Sans" font-weight="700" font-size="14" fill="#e0c010" stroke="#7a6a10" stroke-width=".4">?</text></symbol>
<symbol id="tbody" viewBox="0 0 14 14"><path d="M3 8l5-3 5 2v5l-6 2-5-2z" fill="#4f88d8" stroke="#2a4f8a"/><circle cx="5" cy="4.500" r="3.500" fill="#fff" stroke="#c01818" stroke-width="1.300"/><path d="M3 7l5-5" stroke="#c01818"/><path d="M9 1v3M10 2.500h3" stroke="#222"/></symbol>
<symbol id="tcomp" viewBox="0 0 14 14"><path d="M4 6c-3-5 6-7 7-3M10 8c3 4-6 7-7 3" fill="none" stroke="#222" stroke-width="1.800"/><path d="M10 1l3 3-3 1zM4 13l-3-3 3-1z" fill="#d85a2a"/><path d="M1 7h3M1 9h3" stroke="#c01818"/></symbol>
<symbol id="tedge" viewBox="0 0 14 14"><path d="M2 4c0-2 2-3 4-3h6v3l-2 3H2z" fill="#f5d060" stroke="#6a7aa8"/><path d="M1 5h9v8H3c-1 0-2-1-2-2z" fill="#4f88d8" stroke="#2a4f8a"/><path d="M10 5l3-3v8l-3 3z" fill="#2f62ac"/></symbol>
<symbol id="text1" viewBox="0 0 14 14"><path d="M1 6h6v3h6v4H1z" fill="#f5c840" stroke="#a07a1a"/><path d="M4 1h5v5" fill="none" stroke="#b5851a"/><path d="M2 1h4M4 0v3" stroke="#c01818"/></symbol>
<symbol id="tface" viewBox="0 0 14 14"><path d="M6 1v5" stroke="#5a5a8a"/><path d="M10 1v6c0 4-4 6-8 6h-1c3-2 3-3 3-5z" fill="#f0c46a" stroke="#8a6a9a"/></symbol>
<symbol id="tsecc" viewBox="0 0 14 14"><rect x="1.500" y="3.500" width="4" height="8" fill="#fff" stroke="#111"/><path d="M5 1l8 3v9l-8-3z" fill="#e8e8f2" stroke="#111"/><circle cx="8" cy="7" r="2" fill="#b01818"/><circle cx="10" cy="8" r="1.500" fill="#3a5ab0"/></symbol>
<symbol id="tcurve" viewBox="0 0 14 14"><path d="M5 13c2 0 1-4 2-8s2-4 4-4" fill="none" stroke="#222" stroke-width="1.200"/><path d="M1 3h4M3 1v4" stroke="#c01818"/></symbol>
<symbol id="tspl" viewBox="0 0 14 14"><path d="M1 11c2-8 4-6 6-3s4 2 6-3" fill="none" stroke="#b0231b" stroke-width="1.500"/><circle cx="1.500" cy="10" r="1.300" fill="#222"/><circle cx="12.500" cy="5" r="1.300" fill="#222"/></symbol>
<symbol id="tmesh" viewBox="0 0 14 14"><path d="M1 3c4-2 8-2 12 0l-2 10c-3-1-5-1-8 0z" fill="#6f84e0" stroke="#4a5ec0"/><path d="M2 6c3-1 7-1 10 0M2.500 9c3-1 6-1 9 0M5 2v10M9 2v10" stroke="#e6ecff" stroke-width=".8" fill="none"/></symbol>
<symbol id="texf" viewBox="0 0 14 14"><path d="M1 7h6v2h6v4H1z" fill="#cfd3dc" stroke="#444"/><path d="M4 1h4v6" fill="none" stroke="#444"/><path d="M1 2h5M3 0v4" stroke="#c01818"/><path d="M3 7v6" stroke="#444"/></symbol>
<symbol id="chev" viewBox="0 0 12 10"><path d="M1 1l5 7 5-7" fill="none" stroke="#4f8fb0" stroke-width="1.800"/></symbol>
<symbol id="gear" viewBox="0 0 16 16"><circle cx="8" cy="8" r="4.500" fill="none" stroke="#333" stroke-width="1.600"/><path d="M8 1v3M8 12v3M1 8h3M12 8h3M3 3l2 2M11 11l2 2M13 3l-2 2M5 11l-2 2" stroke="#333" stroke-width="1.600"/></symbol>
<symbol id="tab1" viewBox="0 0 24 28"><path d="M4 3h8v7H4z" fill="#f5d040" stroke="#b8901a"/><path d="M2 8h8v7H2z" fill="#f5c030" stroke="#b8901a"/><path d="M8 11v12h2M8 17h12" stroke="#333" fill="none"/><path d="M14 15h8v7h-8z" fill="#f5d040" stroke="#b8901a"/></symbol>
<symbol id="tab2" viewBox="0 0 24 28"><rect x="2" y="3" width="9" height="8" rx="2" fill="#e26aa0" stroke="#8a2a5a"/><path d="M6 11v14M6 18h7M13 7h8" stroke="#333" fill="none"/><circle cx="17" cy="20" r="4" fill="none" stroke="#a03a7a" stroke-width="1.400"/><circle cx="17" cy="20" r="1.500" fill="#a03a7a"/></symbol>
<symbol id="tab3" viewBox="0 0 24 24"><path d="M2 7c4-2 5-3 7-3l0 17H3z" fill="#ea9a2a" stroke="#8a5a1a"/><path d="M9 5c3-2 4-2 7-2v18H9z" fill="#4fb04a" stroke="#2a7a2a"/><path d="M16 4c3-2 4-2 7-2v17l-7 2z" fill="#2f8ad8" stroke="#1a5a9a"/><path d="M4 9h3M11 8h3M18 7h3" stroke="#fff"/></symbol>
<symbol id="tab4" viewBox="0 0 24 24"><circle cx="9" cy="15" r="8" fill="#1f78c8" stroke="#0f4a8a"/><text x="7" y="20" font-family="Liberation Serif" font-weight="700" font-size="13" fill="#fff">i</text><path d="M9 3c7-1 11 4 12 11M11 7c4 0 6 3 6 6" fill="none" stroke="#1f78c8" stroke-width="2.200"/></symbol>
<symbol id="tab5" viewBox="0 0 24 24"><path d="M4 1h11l5 5v17H4z" fill="#e8f1fb" stroke="#2a5a9a" stroke-width="1.300"/><path d="M15 1v5h5" fill="#cfe0f4" stroke="#2a5a9a"/><circle cx="12" cy="14" r="5.500" fill="#2f9a5a"/><path d="M8 12c3-2 3 2 6 0v5c-2 1-4-1-6 0z" fill="#2a6ac0"/></symbol>
<symbol id="tab6" viewBox="0 0 24 24"><circle cx="12" cy="12" r="11" fill="#8a9aa8" stroke="#4a5a68"/><circle cx="12" cy="12" r="8.500" fill="#f4f7fb"/><path d="M12 6v6h6" fill="none" stroke="#222" stroke-width="1.600"/></symbol>
<symbol id="tab7" viewBox="0 0 24 24"><path d="M14 2l7 5-3 3-2-2-9 10-3-3 8-8-2-2z" fill="#666" stroke="#333"/><path d="M10 12l-6 9c3 2 5 0 6-3l5-5z" fill="#9aa6b8" stroke="#555"/><circle cx="8" cy="20" r="3.500" fill="#d8a040"/></symbol>
<symbol id="tab8" viewBox="0 0 24 24"><rect x="1" y="1" width="22" height="22" fill="#fff" stroke="#2a3a6a"/><rect x="3" y="3" width="7" height="5" fill="#3a5ab0"/><rect x="14" y="3" width="7" height="5" fill="#3a5ab0"/><path d="M10 5.500h4M10 18h4" stroke="#2a3a6a"/><rect x="3.500" y="14.500" width="6" height="7" fill="#fff" stroke="#2a3a6a"/><rect x="14" y="15" width="7" height="6" fill="#7a8a7a"/></symbol>

<symbol id="logo" viewBox="0 0 32 32"><circle cx="16" cy="17" r="12" fill="url(#gGlobe)"/><path d="M9 9c4-1 7 1 8 4s-3 5-5 4-3-4-3-8zM20 20c3-1 6 0 6 2-1 3-4 5-6 4s-2-4 0-6z" fill="#3aa84a"/><path d="M2 26c8 4 22 0 28-12-3 12-18 19-28 15z" fill="#f0a830" stroke="#b8781a" stroke-width=".6"/><path d="M7 2h13l-5 14z" fill="#d8352e" stroke="#8a1a1a" stroke-width=".6"/></symbol>
<symbol id="orb" viewBox="0 0 38 38"><circle cx="19" cy="19" r="18" fill="url(#gOrb)" stroke="#0c2d4f"/><path d="M9 13c3-2 6-2 9 0l-1 5c-3-1-6-1-9 0z" fill="#e8553a"/><path d="M19 13c3 2 6 2 10 0l-1 6c-3 1-7 1-10-1z" fill="#7ab83a"/><path d="M8 19c3-1 6-1 9 0l-1 5c-3-1-6-1-9 1z" fill="#3a8ad8"/><path d="M18 20c3 1 6 1 10 0l-1 5c-3 2-7 1-10-1z" fill="#f2c030"/></symbol>
<symbol id="tb360" viewBox="0 0 32 32"><ellipse cx="10" cy="9" rx="7" ry="8" fill="#7ab83a"/><ellipse cx="22" cy="9" rx="7" ry="8" fill="#3a8ad8"/><ellipse cx="9" cy="23" rx="7" ry="8" fill="#f2c030"/><ellipse cx="22" cy="23" rx="7" ry="8" fill="#d84a3a"/></symbol>
<symbol id="tbie" viewBox="0 0 32 32"><text x="3" y="28" font-family="Liberation Sans" font-weight="700" font-size="37" fill="#58b4ee" stroke="#1a6ab0" stroke-width=".6">e</text><path d="M2 30C-1 20 20 1 30 2c2 2 0 7-3 10" fill="none" stroke="#f2c030" stroke-width="2"/></symbol>
<symbol id="tbfolder" viewBox="0 0 32 28"><rect x="2" y="2" width="28" height="24" rx="2" fill="#f0e6b8" stroke="#b8a050"/><rect x="2" y="2" width="14" height="6" fill="#e8d48a"/><rect x="4" y="9" width="24" height="4" fill="#fdf8dc"/><path d="M3 26v-7h26v7h-7v-5H10v5z" fill="#74b8e0" stroke="#4a8ab0" stroke-width=".6"/></symbol>
<symbol id="tbge" viewBox="0 0 32 32"><circle cx="16" cy="16" r="12" fill="#4fb02a" stroke="#d8f0b8"/><text x="7" y="24" font-family="Liberation Sans" font-weight="700" font-size="25" fill="#fff">e</text><path d="M2 26C4 16 20 2 30 4" fill="none" stroke="#e0f0c8" stroke-width="1.500"/></symbol>
<symbol id="tbq" viewBox="0 0 32 36"><circle cx="16" cy="16" r="12" fill="none" stroke="#30a4f4" stroke-width="6"/><circle cx="16" cy="16" r="8.500" fill="none" stroke="#0f62b8" stroke-width="1.500"/><path d="M14 28c0-4 6-6 9-3 3-1 6 1 6 4s-2 4-4 4H16c-3 0-4-3-2-5z" fill="#fff"/></symbol>
<symbol id="tray1" viewBox="0 0 18 18"><rect x="1" y="7" width="16" height="10" rx="1" fill="#dfe6ee" stroke="#6a7a8a"/><path d="M3 10h12M3 12.500h12M5 15h8" stroke="#667" stroke-dasharray="1 1"/><path d="M9 7c0-3 2-3 5-5" fill="none" stroke="#ccd"/></symbol>
<symbol id="tray2" viewBox="0 0 18 18"><circle cx="9" cy="9" r="8" fill="#1d3a9a" stroke="#c8d4f0"/><text x="5.500" y="13.500" font-family="Liberation Sans" font-weight="700" font-size="12" fill="#fff">?</text></symbol>
<symbol id="tray3" viewBox="0 0 18 18"><ellipse cx="9" cy="6.500" rx="5" ry="5.500" fill="#222"/><ellipse cx="9" cy="12" rx="6" ry="5" fill="#fff"/><path d="M3 11l12 0 1 3c-4 2-10 2-14 0z" fill="#d8352e"/><path d="M4 15l-2 3h5zM14 15l2 3h-5z" fill="#f0a830"/></symbol>
<symbol id="tray4" viewBox="0 0 18 18"><circle cx="9" cy="9" r="8" fill="#d8d82a" stroke="#8a9a1a"/><path d="M9 4v10M4 9h10" stroke="#1f6a1a" stroke-width="3"/></symbol>
<symbol id="tray5" viewBox="0 0 18 18"><path d="M9 1l7 2v6c0 4-4 7-7 8-3-1-7-4-7-8V3z" fill="#c8e0b0" stroke="#5a8a4a"/><path d="M10 3L6 10h3l-1 5 4-7H9z" fill="#3fae3a"/></symbol>
<symbol id="tray6" viewBox="0 0 18 18"><path d="M3 1v16" stroke="#fff" stroke-width="1.500"/><path d="M3 2c3-1 5 1 8 0v6c-3 1-5-1-8 0z" fill="#f4f4f4"/><circle cx="12" cy="13" r="4.500" fill="#d8352e" stroke="#fff"/><path d="M10 11l4 4M14 11l-4 4" stroke="#fff" stroke-width="1.300"/></symbol>
<symbol id="tray7" viewBox="0 0 18 18"><rect x="3.500" y="3.500" width="12" height="9" fill="#1a4a80" stroke="#f0f0f0"/><path d="M9 13v3M3 16.500h12M1 1h4v3H1z" stroke="#f0f0f0" fill="none"/></symbol>
<symbol id="tray8" viewBox="0 0 18 18"><path d="M2 7h3l4-4v12l-4-4H2z" fill="#e8eef4"/><path d="M11 6c1.500 1.500 1.500 4.500 0 6M13 4c3 3 3 7 0 10" fill="none" stroke="#e8eef4"/></symbol>
</defs>
</svg>

<div class="app">
  <header class="titlebar">
    <span class="nx">NX</span>
    <span class="title">NX 10 - 制图 - [可变倒角.prt（修改的）]</span>
    <span class="siemens">SIEMENS</span>
    <span class="winctl"><b class="wmin"></b><b class="wmax"></b><svg class="wclose"><use href="#xl"/></svg></span>
  </header>

  <nav class="menubar">
    <svg class="mico"><use href="#s0"/></svg>
    <span>文件(<u>F</u>)</span><span>编辑(<u>E</u>)</span><span>视图(<u>V</u>)</span><span>插入(<u>S</u>)</span><span>格式(<u>R</u>)</span><span>工具(<u>T</u>)</span><span>装配(<u>A</u>)</span><span>信息(<u>I</u>)</span><span class="mgap">分析(<u>L</u>)</span><span>首选项(<u>P</u>)</span><span>窗口(<u>O</u>)</span><span>GC工具箱</span><span>星空外挂 V6.935F</span><span>帮助(<u>H</u>)</span>
    <span class="docctl"><b class="wmin"></b><b class="wmax"></b><svg class="wclose bold"><use href="#xmark"/></svg></span>
  </nav>

  <div class="tb row1">
    <i class="grip"></i><svg><use href="#logo"/></svg><span class="tbtext">启动</span><i class="dd"></i>
    <svg><use href="#new"/></svg><svg><use href="#open"/></svg><svg><use href="#save"/></svg><i class="sep"></i>
    <svg><use href="#cut"/></svg><svg><use href="#copy"/></svg><svg><use href="#paste"/></svg><svg><use href="#xmark"/></svg><i class="sep"></i>
    <svg><use href="#undo"/></svg><i class="dd"></i><svg><use href="#redo"/></svg><i class="sep"></i>
    <svg><use href="#aa"/></svg><i class="dd"></i><i class="sep"></i><svg><use href="#info"/></svg><i class="sep"></i><i></i>
    <div class="searchbox"><span>查找命令</span><svg><use href="#searchi"/></svg></div>
    <i class="dd low"></i><i class="grip"></i><svg><use href="#fit"/></svg><i class="dd"></i><i class="dd low"></i><i class="grip"></i>
    <svg><use href="#layers"/></svg><i class="sep"></i><svg><use href="#dpaint"/></svg><svg><use href="#palw"/></svg><i class="sep"></i>
    <svg><use href="#pdiamond"/></svg><i class="dd"></i><i class="sep"></i><svg><use href="#rline"/></svg><i class="dd"></i><svg><use href="#rulerd"/></svg><i class="dd low"></i>
  </div>

  <div class="tb row2">
    <i class="grip"></i><svg><use href="#s1"/></svg><i></i><svg><use href="#s2"/></svg><i></i>
    <span class="on"><svg><use href="#s3"/></svg></span><svg><use href="#s4"/></svg><svg><use href="#s5"/></svg>
    <span class="on"><svg><use href="#s6"/></svg></span><svg><use href="#s7"/></svg><svg><use href="#s8"/></svg><svg><use href="#s9"/></svg><i class="sep"></i>
    <svg><use href="#s10"/></svg><i class="sep"></i><svg><use href="#s11"/></svg><i class="dd"></i><i class="dd low"></i><i class="grip"></i>
    <svg><use href="#s12"/></svg><svg><use href="#s13"/></svg><svg><use href="#s14"/></svg><i class="sep"></i><svg><use href="#s15"/></svg><i class="dd low"></i><i class="grip"></i>
    <svg><use href="#t1"/></svg><svg><use href="#t2"/></svg><svg><use href="#t3"/></svg><svg><use href="#t4"/></svg><svg><use href="#t5"/></svg><svg><use href="#t6"/></svg><svg><use href="#t7"/></svg><svg><use href="#t8"/></svg><i class="dd"></i>
    <svg><use href="#t9"/></svg><i class="dd"></i><b class="fmt">B</b><em class="fmt">I</em>
    <span class="azs"><span class="aza">A</span><br>Z<i class="azarrow"></i></span><i class="sep"></i>
    <svg><use href="#t10"/></svg><svg><use href="#t11"/></svg><svg><use href="#t12"/></svg><svg><use href="#t13"/></svg><svg><use href="#t14"/></svg><svg><use href="#t15"/></svg><svg><use href="#t15"/></svg><svg><use href="#t16"/></svg><i class="dd"></i><svg><use href="#t17"/></svg><i></i>
    <span class="overflow">»<i class="dd"></i></span>
  </div>

  <main class="work">
    <aside class="tabs">
      <svg class="gear"><use href="#gear"/></svg>
      <svg class="tabi"><use href="#tab1"/></svg>
      <span class="tabsel"><svg class="tabi"><use href="#tab2"/></svg></span>
      <svg class="tabi"><use href="#tab3"/></svg>
      <svg class="tabi"><use href="#tab4"/></svg>
      <svg class="tabi"><use href="#tab5"/></svg>
      <svg class="tabi"><use href="#tab6"/></svg>
      <svg class="tabi"><use href="#tab7"/></svg>
      <svg class="tabi"><use href="#tab8"/></svg>
    </aside>

    <section class="nav">
      <div class="navhead"><span>部件导航器</span><b class="navmax"></b></div>
      <div class="navtable">
        <div class="tablehead"><span>名称</span><i class="sortup"></i></div>
        <div class="treewrap">
          <div class="tree">
            <i class="guide g1"></i><i class="guide g2"></i><i class="guide g3"></i>
            <div class="r l0"><i class="exp minus"></i><svg class="tk"><use href="#ck"/></svg><svg class="ti"><use href="#tsheets"/></svg><span>图纸</span></div>
            <div class="r l1"><i class="exp minus"></i><svg class="tk"><use href="#ck"/></svg><svg class="ti"><use href="#tsheet"/></svg><span>图纸页 "Sheet 1"</span></div>
            <div class="r l2"><i class="exp plus"></i><svg class="tk"><use href="#ck"/></svg><svg class="ti"><use href="#timp"/></svg><span>导入的 "TOP"</span></div>
            <div class="r l2"><i class="lead"></i><svg class="tk"><use href="#ck"/></svg><svg class="ti"><use href="#tsec"/></svg><span>截面 "SX@1"</span></div>
            <div class="r l2"><i class="exp plus"></i><svg class="tk"><use href="#ck"/></svg><svg class="ti"><use href="#tpro"/></svg><span>投影 "ORTHO"</span></div>
            <div class="r l1"><i class="lead"></i><svg class="tk"><use href="#tq"/></svg><svg class="ti"><use href="#tfolder"/></svg><span>过时</span></div>
            <div class="r l0 hist"><i class="exp minus"></i><svg class="ti"><use href="#tfolder"/></svg><span>模型历史记录</span></div>
            <div class="r l1 off"><i class="lead"></i><svg class="tk"><use href="#box"/></svg><svg class="ti"><use href="#tbody"/></svg><span>体 (1)</span></div>
            <div class="r l1 off"><i class="lead"></i><svg class="tk"><use href="#boxe"/></svg><svg class="ti"><use href="#tcomp"/></svg><span>复合曲线 (2)</span></div>
            <div class="r l1 off"><i class="lead"></i><svg class="tk"><use href="#box"/></svg><svg class="ti"><use href="#tedge"/></svg><span>边倒圆 (6)</span></div>
            <div class="r l1 off"><i class="lead"></i><svg class="tk"><use href="#box"/></svg><svg class="ti"><use href="#text1"/></svg><span>抽取体 (8)</span></div>
            <div class="r l1 off"><i class="lead"></i><svg class="tk"><use href="#box"/></svg><svg class="ti"><use href="#tcomp"/></svg><span>复合曲线 (9)</span></div>
            <div class="r l1 off"><i class="lead"></i><svg class="tk"><use href="#box"/></svg><svg class="ti"><use href="#tface"/></svg><span>面倒圆 (10)</span></div>
            <div class="r l1 off"><i class="lead"></i><svg class="tk"><use href="#box"/></svg><svg class="ti"><use href="#tsecc"/></svg><span>截面曲线 (11)</span></div>
            <div class="r l1 off"><i class="lead"></i><svg class="tk"><use href="#box"/></svg><svg class="ti"><use href="#tcurve"/></svg><span>复合曲线 (12)</span></div>
            <div class="r l1 off"><i class="lead"></i><svg class="tk"><use href="#box"/></svg><svg class="ti"><use href="#tspl"/></svg><span>样条 (13)</span></div>
            <div class="r l1 off"><i class="lead"></i><svg class="tk"><use href="#box"/></svg><svg class="ti"><use href="#tspl"/></svg><span>样条 (15)</span></div>
            <div class="r l1"><i class="lead"></i><svg class="tk"><use href="#box"/></svg><svg class="ti"><use href="#tmesh"/></svg><span>通过曲线网格 (16)</span></div>
            <div class="r l1"><i class="lead"></i><svg class="tk"><use href="#box"/></svg><svg class="ti"><use href="#tmesh"/></svg><span>通过曲线网格 (17)</span></div>
            <div class="r l1 off"><i class="lead"></i><svg class="tk"><use href="#box"/></svg><svg class="ti"><use href="#tcurve"/></svg><span>复合曲线 (20)</span></div>
            <div class="r l1"><i class="lead"></i><svg class="tk"><use href="#box"/></svg><svg class="ti"><use href="#tmesh"/></svg><span>通过曲线网格 (21)</span></div>
            <div class="r l1"><i class="lead"></i><svg class="tk"><use href="#box"/></svg><svg class="ti"><use href="#texf"/></svg><span>抽取面 (22)</span></div>
            <div class="r l1"><i class="lead"></i><svg class="tk"><use href="#box"/></svg><svg class="ti"><use href="#texf"/></svg><span>抽取面 (23)</span></div>
            <div class="r l1"><i class="lead"></i><svg class="tk"><use href="#box"/></svg><svg class="ti"><use href="#texf"/></svg><span>抽取面 (24)</span></div>
            <div class="r l1"><i class="lead"></i><svg class="tk"><use href="#box"/></svg><svg class="ti"><use href="#texf"/></svg><span>抽取面 (25)</span></div>
            <div class="r l1"><i class="lead"></i><svg class="tk"><use href="#box"/></svg><svg class="ti"><use href="#texf"/></svg><span>抽取面 (26)</span></div>
            <div class="r l1"><i class="lead"></i><svg class="tk"><use href="#box"/></svg><svg class="ti"><use href="#texf"/></svg><span>抽取面 (27)</span></div>
            <div class="r l1"><i class="lead"></i><svg class="tk"><use href="#box"/></svg><svg class="ti"><use href="#texf"/></svg><span>抽取面 (28)</span></div>
            <div class="r l1"><i class="lead"></i><svg class="tk"><use href="#box"/></svg><svg class="ti"><use href="#texf"/></svg><span>抽取面 (29)</span></div>
            <div class="r l1"><i class="lead"></i><svg class="tk"><use href="#box"/></svg><svg class="ti"><use href="#texf"/></svg><span>抽取面 (30)</span></div>
            <div class="r l1"><i class="lead"></i><svg class="tk"><use href="#box"/></svg><svg class="ti"><use href="#texf"/></svg><span>抽取面 (31)</span></div>
          </div>
          <div class="vscroll"><i class="aup"></i><b class="vthumb"><i class="ridges"></i></b><i class="adown"></i></div>
        </div>
        <div class="hscroll"><i class="aleft"></i><b class="hthumb">Ⅲ</b><i class="aright"></i></div>
      </div>
      <div class="splitter"></div>
      <div class="acc"><span>相依性</span><svg><use href="#chev"/></svg></div>
      <div class="acc"><span>细节</span><svg><use href="#chev"/></svg></div>
      <div class="acc"><span>预览</span><svg><use href="#chev"/></svg></div>
    </section>

    <section class="pal">
      <div class="palbox pa">
        <i class="pgrip"></i>
        <svg><use href="#aa"/></svg><svg><use href="#pw1"/></svg><svg><use href="#pw2"/></svg><svg><use href="#pw3"/></svg>
        <i class="hsep"></i>
        <svg><use href="#pw4"/></svg><svg><use href="#pw5"/></svg>
        <i class="hsep"></i>
        <svg><use href="#pw6"/></svg>
        <i class="hsep"></i>
        <svg><use href="#pd1"/></svg>
        <i class="more"></i>
      </div>
      <div class="palbox pb">
        <i class="pgrip"></i>
        <span class="wdd"><svg><use href="#flash"/></svg><i class="dd"></i></span>
        <i class="more"></i>
      </div>
    </section>
    <section class="pal pal2">
      <div class="palbox pc">
        <i class="pgrip"></i>
        <svg><use href="#bigA"/></svg><i></i><svg><use href="#leader"/></svg><svg><use href="#datum"/></svg><svg><use href="#zoomm"/></svg><svg><use href="#ball7"/></svg><svg><use href="#sqrt"/></svg><svg><use href="#angl"/></svg>
        <i class="hsep"></i>
        <svg><use href="#xl"/></svg><svg><use href="#fcross"/></svg><svg><use href="#hatch"/></svg><svg><use href="#paint"/></svg>
        <i class="hsep"></i>
        <span class="wdd"><svg><use href="#ch"/></svg><i class="dd"></i></span><svg><use href="#imgi"/></svg>
        <i class="hsep"></i>
        <svg><use href="#grayd"/></svg><svg><use href="#grayd"/></svg>
        <i class="more"></i>
      </div>
    </section>

    <section class="canvas">
      <svg class="draw" viewBox="291 121 989 774" xmlns="http://www.w3.org/2000/svg">
        <defs>
          <clipPath id="cutaway"><path d="M786.700 361H836.700L841.700 379 846.700 383.300 847.700 427.300 861.700 447.300 880 459.300 888.300 465 886.500 560 879 766.700C878 775 873 778.300 867.200 778.300H757C751 778.300 747 775 745.800 768.300L737.700 560 735.700 486.700 736 465 769.300 441.700 776.700 426.700 777.300 382.300 782.700 377.300z"/></clipPath>
        </defs>
        <path class="topline" d="M291 122H1280"/>
        <path class="dash" d="M291 138.500H1280"/>
        <path class="axis" d="M1063.500 121V748M1063.500 813V895M291 780.500H1031M1095 780.500H1280"/>
        <rect class="frame" x="360.500" y="335.500" width="242" height="468.500"/>
        <rect class="frame" x="709.500" y="335.500" width="205" height="468.500"/>
        <g class="thin">
          <path d="M456 365.700H506.700M446 427H516.700M438.300 442.300H524M406 768H556"/>
          <path class="wave" d="M386.700 493.300C400 478 414 467.300 428.300 467.300 448 467.300 464 494.300 481.700 494.300 500 494.300 516 467.300 535 467.300 550 467.300 562 478 575 493.300"/>
        </g>
        <g class="thick">
          <path d="M456 361H506.700M456 361L451.700 378H511L506.700 361M451.700 378L447.300 381.700 446.700 383 446 427 438.300 442.300 400 467.300C392 473 387 482 386.700 490L391.400 560 406.200 768.300C407 775 412 778.300 417.300 778.300H546C552 778.300 555 775 555.700 768.300L571.200 560 575 490C575 482 569 473 561.700 467.300L524 442.300 516.700 427 515.700 381.700 511 378"/>
          <path d="M400 467.300C412 463 428 462 445 465 460 467 470 467.700 481.700 467.700 495 467.700 510 465 530 462.300 545 462 555 465 561.700 467.300"/>
        </g>
        <g clip-path="url(#cutaway)" class="hatchlines">
          <path class="hg" d="M820 340L340 820M850 340L360 830"/>
          <path class="hb" d="M880.800 340L340 880.800"/>
          <path class="hg" d="M909.700 340L340 909.700"/>
          <path class="hb" d="M940 340L340 940"/>
          <path class="hg" d="M969 340L340 969M998.600 340L340 998.600"/>
          <path class="hb" d="M1028 340L340 1028"/>
          <path class="hg" d="M1057.800 340L340 1057.800M1087.400 340L340 1087.400"/>
          <path class="hb" d="M1117 340L340 1117"/>
          <path class="hg" d="M1146.600 340L340 1146.600M1176.200 340L340 1176.200"/>
          <path class="hb" d="M1205.800 340L340 1205.800"/>
          <path class="hg" d="M1235.400 340L340 1235.400M1265 340L340 1265"/>
          <path class="hb" d="M1294.600 340L340 1294.600"/>
        </g>
        <path class="thick" d="M786.700 361H836.700L841.700 379 846.700 383.300 847.700 427.300 861.700 447.300 880 459.300 888.300 465 886.500 560 879 766.700C878 775 873 778.300 867.200 778.300H757C751 778.300 747 775 745.800 768.300L737.700 560 735.700 486.700 736 465 769.300 441.700 776.700 426.700 777.300 382.300 782.700 377.300z"/>
        <g class="dim">
          <path d="M668 431L540 495M771 458L628 504"/>
          <path class="arrow" d="M571.500 480.500L558 484 561 489zM737.500 468.500L750 461 753 470z"/>
          <text class="dimt" transform="translate(590 456) rotate(-24)">R14,0</text>
          <text class="dimt" transform="translate(622 496) rotate(-17)">R3,0</text>
        </g>
        <text class="sheetname" x="300" y="890">"Sheet 1"</text>
      </svg>
      <div class="handle"><i></i></div>
    </section>
  </main>

  <div class="tb row3">
    <i class="grip"></i>
    <div class="select"><span>Sheet 1</span><i class="dd"></i></div>
    <span class="flagwrap"><svg><use href="#flag"/></svg></span>
    <span class="graytext">完成草图</span>
    <svg><use href="#spl"/></svg><svg><use href="#lin"/></svg><svg><use href="#arc"/></svg><svg><use href="#cir"/></svg><svg><use href="#fil"/></svg><svg><use href="#chm"/></svg><svg><use href="#rct"/></svg><svg><use href="#hex"/></svg><svg><use href="#pro"/></svg><svg><use href="#cro"/></svg><svg><use href="#cyl"/></svg><i class="dd"></i><i class="sep"></i>
    <svg><use href="#g1"/></svg><svg><use href="#g2"/></svg><svg><use href="#g3"/></svg><i class="sep"></i><svg><use href="#g4"/></svg><svg><use href="#g5"/></svg><svg><use href="#g6"/></svg><i class="dd"></i><i class="dd low"></i><i class="grip"></i>
    <svg><use href="#b1"/></svg><i class="dd"></i><svg><use href="#b1"/></svg><svg><use href="#b3"/></svg><svg><use href="#b4"/></svg><svg><use href="#b5"/></svg><svg><use href="#b6"/></svg><i class="dd low"></i>
  </div>

  <div class="tb row4">
    <i></i>
    <div class="select"><span>没有选择过滤器</span><i class="dd"></i></div><i></i>
    <div class="select"><span>整个装配</span><i class="dd"></i></div><i class="sep"></i>
    <svg><use href="#f1"/></svg><svg><use href="#f2"/></svg><i class="dd"></i><svg><use href="#f3"/></svg><svg><use href="#f4"/></svg><i class="sep"></i>
    <svg><use href="#sel"/></svg><i class="dd"></i><i class="sep"></i>
    <span class="on"><svg><use href="#sn1"/></svg></span><span class="on"><svg><use href="#sn2"/></svg></span><span class="on"><svg><use href="#sn3"/></svg></span>
    <svg><use href="#sn4"/></svg>
    <span class="on"><svg><use href="#sn5"/></svg></span>
    <svg><use href="#sn6"/></svg>
    <span class="on"><svg><use href="#sn7"/></svg></span>
    <svg><use href="#sn8"/></svg>
    <span class="on"><svg><use href="#sn9"/></svg></span><span class="on"><svg><use href="#sn10"/></svg></span>
    <svg><use href="#sn11"/></svg>
  </div>

  <div class="status">选择对象并使用 <b>MB3</b>，或双击，或按住并拖动来移动视图、尺寸或注释</div>

  <footer class="taskbar">
    <svg class="orb"><use href="#orb"/></svg>
    <svg class="tbi"><use href="#tb360"/></svg>
    <svg class="tbi"><use href="#tbie"/></svg>
    <svg class="tbi"><use href="#tbfolder"/></svg>
    <span class="task act"><svg class="tbi"><use href="#tbge"/></svg></span>
    <svg class="tbi"><use href="#tbq"/></svg>
    <span class="task act two"><svg class="tbi"><use href="#logo"/></svg></span>
    <span class="tbspace"></span>
    <svg class="tray"><use href="#tray1"/></svg>
    <svg class="tray"><use href="#tray2"/></svg>
    <span class="tray up"></span>
    <svg class="tray"><use href="#tray3"/></svg>
    <svg class="tray"><use href="#tray4"/></svg>
    <svg class="tray"><use href="#tray5"/></svg>
    <svg class="tray"><use href="#tray6"/></svg>
    <svg class="tray"><use href="#tray7"/></svg>
    <svg class="tray"><use href="#tray8"/></svg>
    <span class="clock">14:29<br>2016/10/13</span>
    <span class="showdesk"></span>
  </footer>
</div>

<div class="watermark">
  <svg class="wmhex" viewBox="0 0 84 106">
    <path d="M42 1L82 24V82L42 105 2 82V24z" fill="#6f9fd6"/>
    <path d="M42 1L82 24V82L42 105C62 80 62 28 42 1z" fill="#78c8f0"/>
    <path d="M2 82C12 62 40 50 60 62 72 70 78 76 82 82L42 105z" fill="#3f96d0" opacity=".55"/>
    <path d="M42 24L68 40V70L42 86 16 70V40z" fill="#fff"/>
    <path d="M42 33L61 44V66L42 77 23 66V44z" fill="#6f9fd6"/>
    <path d="M42 55L61 44V66L42 77z" fill="#78c8f0"/>
    <path d="M42 33L61 44 42 55 23 44z" fill="#7fa9dc"/>
    <path d="M42 55V77M42 55L61 44M42 55L23 44" stroke="#fff" stroke-width="1" fill="none"/>
  </svg>
  <div class="wmtext">
    <span class="wmbig">3D世界网</span>
    <span class="wmurl">WWW.3DSJW.COM</span>
  </div>
</div>
</body>
</html>
```

FILE: styles.css
```css
* { box-sizing: border-box; }
html, body { margin: 0; padding: 0; width: 1280px; height: 1024px; overflow: hidden; background: #fff; }
body { font: 12px/1.2 "Liberation Sans", "Noto Sans CJK SC", sans-serif; color: #222; position: relative; text-spacing-trim: space-all; }
i, em { font-style: normal; }
.sprite { position: absolute; width: 0; height: 0; overflow: hidden; }
.app { display: flex; flex-direction: column; height: 1024px; }

/* title */
.titlebar { height: 26px; display: flex; align-items: center; background: #fff; }
.nx { font: 700 25px/26px "Liberation Sans", sans-serif; color: #84929c; width: 41px; padding-left: 3px; border-right: 1px solid #d6d6d6; height: 26px; }
.title { margin-left: 4px; font-size: 13px; }
.siemens { margin-left: auto; font: 700 12.500px "Liberation Sans", sans-serif; letter-spacing: .6px; color: #178a8e; margin-right: 27px; }
.winctl { display: flex; align-items: center; gap: 12px; width: 63px; }
.wmin { display: block; width: 8px; height: 2px; background: #333; margin-top: 8px; }
.wmax { display: block; width: 11px; height: 10px; border: 1px solid #333; box-shadow: 2px -2px 0 -1px #fff, 2px -2px 0 0 #333; margin-top: 2px; }
.wclose { width: 13px; height: 13px; }
.docctl { margin-left: auto; display: flex; align-items: center; gap: 7px; width: 52px; flex: none; }
.docctl .wmin { height: 2.500px; background: #111; }
.docctl .wmax { border-width: 1.500px; border-color: #111; }
.docctl .wclose { width: 13px; height: 13px; flex: none; }

/* menu */
.menubar { height: 27px; background: #c7d7d4; display: flex; align-items: center; gap: 13px; padding-left: 8px; font-size: 11px; color: #333; white-space: nowrap; }
.mico { width: 16px; height: 16px; margin-right: -8px; flex: none; }
.mgap { margin-right: 7px; }
u { text-decoration: underline; }

/* toolbars */
.tb { display: grid; align-items: center; justify-items: center; background: #fff; }
.tb > svg, .tb .on > svg { width: 24px; height: 24px; }
.row1 > svg:nth-of-type(1) { width: 26px; height: 26px; }
.grip { display: block; width: 2px; height: 26px; border-left: 2px dotted #b5b5b5; }
.sep { display: block; width: 1px; height: 27px; background: #dedede; }
.dd { display: block; width: 0; height: 0; border: 3px solid transparent; border-top: 4px solid #222; border-bottom: 0; }
.dd.low { align-self: end; margin-bottom: 7px; }
.on { display: flex; align-items: center; justify-content: center; width: 100%; height: 100%; background: #c6d6d3; border: 1px solid #b8c9c6; }
.tbtext { font-size: 11.500px; justify-self: start; margin-left: 3px; }
.row1 { height: 33px; width: 930px; border-right: 1px solid #e2e2e2; border-bottom: 1px solid #e2e2e2;
  grid-template-columns: 9px 26px 27px 12px 29px 31px 32px 4px 32px 32px 32px 30px 4px 34px 10px 32px 4px 33px 12px 6px 28px 8px 5px 125px 15px 14px 28px 14px 10px 14px 26px 8px 30px 30px 8px 28px 14px 8px 28px 16px 26px 15px; }
.row2 { height: 35px;
  grid-template-columns: 9px 26px 9px 30px 2px 31px 32px 31px 30px 28px 34px 28px 6px 34px 2px 34px 13px 10px 8px 34px 32px 29px 8px 30px 14px 10px 30px 31px 30px 30px 32px 31px 31px 30px 16px 26px 20px 22px 36px 26px 12px 24px 38px 27px 32px 33px 31px 30px 30px 14px 28px 18px 18px; }
.row2 > .on { height: 31px; }
.searchbox { width: 125px; height: 20px; border: 1px solid #8f8f8f; display: flex; align-items: center; justify-content: space-between; padding: 0 2px 0 2px; font-size: 11px; }
.searchbox svg { width: 16px; height: 16px; }
.fmt { font: 700 17px "Liberation Serif", serif; color: #222; }
em.fmt { font-weight: 400; font-style: italic; }
.azs { position: relative; font: 700 13px/11px "Liberation Serif", serif; color: #b03a5a; width: 20px; }
.aza { color: #5a4aa8; }
.azarrow { position: absolute; left: 13px; top: 5px; width: 3px; height: 13px; background: #c9413a; }
.overflow { display: flex; flex-direction: column; align-items: center; gap: 8px; font-size: 14px; line-height: 12px; }

/* work */
.work { flex: 0 0 774px; height: 774px; display: flex; background: #fff; }
.tabs { width: 32px; background: #d9dada; display: flex; flex-direction: column; align-items: flex-start; position: relative; padding-top: 4px; }
.gear { width: 16px; height: 16px; margin: 2px 0 0 7px; }
.tabi { width: 24px; height: 26px; margin-left: 5px; display: block; }
.tabs > .tabi:nth-of-type(2) { margin-top: 29px; }
.tabsel { display: flex; align-items: center; width: 33px; height: 45px; background: #fff; margin-top: 6px; position: relative; border: 1px solid #c8c8c8; border-right: 0; }
.tabsel .tabi { margin-left: 4px; }
.tabs > .tabi:nth-of-type(3) { margin-top: 7px; }
.tabs > .tabi:nth-of-type(4) { margin-top: 28px; }
.tabs > .tabi:nth-of-type(5) { margin-top: 28px; }
.tabs > .tabi:nth-of-type(6) { margin-top: 28px; }
.tabs > .tabi:nth-of-type(7) { margin-top: 16px; }
.tabs > .tabi:nth-of-type(8) { margin-top: 16px; }

.nav { width: 165px; border-left: 1px solid #9a9a9a; border-right: 1px solid #777; display: flex; flex-direction: column; padding: 0 8px 0 6px; }
.navhead { height: 29px; flex: none; display: flex; align-items: center; justify-content: space-between; padding: 0 8px 0 3px; font-size: 12px; color: #333; }
.navmax { display: block; width: 12px; height: 11px; border: 1px solid #222; border-top-width: 2px; }
.navtable { width: 150px; height: 662px; flex: none; border: 1px solid #dedede; display: flex; flex-direction: column; margin-left: 0; }
.tablehead { height: 22px; flex: none; background: #efefef; display: flex; align-items: center; padding-left: 6px; font-size: 12px; color: #333; letter-spacing: 1px; }
.sortup { width: 0; height: 0; margin-left: 16px; border: 4.500px solid transparent; border-bottom: 5px solid #222; border-top: 0; }
.treewrap { flex: none; height: 622px; display: flex; }
.tree { position: relative; width: 130px; overflow: hidden; }
.guide { position: absolute; width: 0; border-left: 1px dotted #777; }
.g1 { left: 9px; top: 14px; height: 116px; }
.g2 { left: 28px; top: 36px; height: 575px; }
.g3 { left: 47px; top: 56px; height: 36px; }
.r { position: relative; height: 20px; display: flex; align-items: center; white-space: nowrap; border-bottom: 1px solid #f1f1f1; font-size: 12px; color: #333; background: #fff; background-clip: padding-box; }
.r > span { background: #fff; }
.l0 { padding-left: 4px; }
.l1 { padding-left: 23px; }
.l2 { padding-left: 42px; }
.exp { display: block; position: relative; width: 10px; height: 10px; margin-right: 7px; border: 1px dotted #777; background: #fff; flex: none; }
.exp::before { content: ""; position: absolute; left: 1px; top: 3px; width: 6px; height: 2px; border-top: 1px solid #222; }
.plus::after { content: ""; position: absolute; left: 3.500px; top: 1px; height: 6px; border-left: 1px solid #222; }
.lead { display: block; width: 10px; height: 0; margin: 0 2px 0 5px; border-top: 1px dotted #777; flex: none; }
.tk { width: 14px; height: 14px; flex: none; margin: 0 1px 0 -1px; }
.ti { width: 14px; height: 14px; flex: none; margin-right: 5px; }
.hist .exp { margin-right: 4px; }
.hist .ti { width: 16px; margin-right: 4px; }
.off > span { color: #a3a3a3; }
.vscroll { width: 17px; height: 622px; background: linear-gradient(90deg, #f2f2f2, #fafafa); position: relative; display: flex; flex-direction: column; align-items: center; }
.aup, .adown { display: block; width: 0; height: 0; border: 3.500px solid transparent; }
.aup { border-bottom: 4px solid #555; border-top: 0; margin-top: 7px; }
.adown { border-top: 4px solid #555; border-bottom: 0; position: absolute; bottom: 7px; }
.vthumb { display: block; position: absolute; top: 18px; left: 1px; width: 14px; height: 465px; background: linear-gradient(90deg, #d6d6d6, #c3c3c3 60%, #bdbdbd); border: 1px solid #b8b8b8; border-radius: 2px; }
.ridges { position: absolute; top: 230px; left: 3px; width: 6px; height: 7px; border-top: 1px solid #555; border-bottom: 1px solid #555; }
.ridges::after { content: ""; position: absolute; left: 0; top: 2px; width: 6px; border-top: 1px solid #555; }
.hscroll { flex: none; height: 16px; background: #f0f0f0; display: flex; align-items: center; position: relative; }
.aleft, .aright { display: block; width: 0; height: 0; border: 3.500px solid transparent; position: absolute; }
.aleft { left: 6px; border-right: 4px solid #444; border-left: 0; }
.aright { left: 119px; border-left: 4px solid #444; border-right: 0; }
.hthumb { display: block; position: absolute; left: 19px; top: 1px; width: 29px; height: 14px; background: linear-gradient(#e6e6e6, #c8c8c8); border: 1px solid #a8a8a8; border-radius: 2px; font: 400 9px/12px "Liberation Sans", sans-serif; text-align: center; color: #333; }
.splitter { height: 5px; margin: 2px -1px 0 -1px; width: 150px; background: #cfcfcf; border: 1px solid #bbb; flex: none; }
.acc { height: 24px; flex: none; width: 150px; margin-left: -1px; display: flex; align-items: center; justify-content: space-between; padding: 2px 6px 0 7px; border-bottom: 2px solid #cfcfcf; font-size: 14px; color: #4f8fb0; }
.acc svg { width: 12px; height: 10px; margin-top: -4px; }

/* palettes */
.pal { width: 46px; background: #fff; display: flex; flex-direction: column; }
.pal2 { border-right: 1px solid #777; }
.palbox { width: 44px; margin: 1px 0 0 2px; border-right: 1px solid #e4e4e4; border-bottom: 1px solid #e4e4e4; display: grid; justify-items: center; align-items: center; }
.palbox > svg, .wdd > svg { width: 24px; height: 24px; }
.pgrip { display: block; width: 38px; height: 0; border-top: 2px dotted #aaa; }
.hsep { display: block; width: 38px; height: 1px; background: #e2e2e2; }
.more { display: block; justify-self: start; margin-left: 8px; width: 0; height: 0; border: 3px solid transparent; border-right: 3px solid #222; border-left: 0; }
.wdd { display: flex; align-items: center; justify-self: start; gap: 4px; margin-left: 5px; }
.pa { height: 285px; margin-top: 3px; grid-template-rows: 8px 26px 34px 28px 34px 4px 32px 30px 6px 32px 4px 30px 16px; }
.pb { height: 52px; margin-top: 92px; grid-template-rows: 8px 30px 13px; }
.pc { height: 503px; margin-top: 3px; grid-template-rows: 8px 26px 10px 24px 28px 34px 28px 36px 24px 14px 24px 36px 26px 36px 4px 30px 34px 2px 36px 26px 16px; }

/* canvas */
.canvas { flex: 1; position: relative; background: #d2d4d6; margin-left: 2px; min-width: 0; }
.draw { display: block; width: 989px; height: 774px; }
.topline { stroke: #7d7f82; stroke-width: 2; fill: none; }
.dash { stroke: #555; fill: none; stroke-dasharray: 9 6; }
.axis { stroke: #111; fill: none; stroke-width: 1; }
.frame { fill: none; stroke: #8c8e90; stroke-width: 1; }
.thin { fill: none; stroke: #8696aa; stroke-width: 1; }
.wave { stroke: #5d7088; }
.thick, .thick path { fill: none; stroke: #3f6396; stroke-width: 1.700; }
.hatchlines path { fill: none; stroke-width: 1; }
.hg { stroke: #8c939e; }
.hb { stroke: #3f5a85; }
.dim path { fill: none; stroke: #a08466; stroke-width: 1; }
.dim .arrow { fill: #a0713f; stroke: #a0713f; }
.dimt { font: 400 18px "Liberation Sans", sans-serif; letter-spacing: 6px; fill: #a5856a; }
.sheetname { font: 12px "Liberation Sans", sans-serif; fill: #d5a888; }
.handle { position: absolute; right: 0; top: 420px; width: 10px; height: 59px; border-radius: 4px 0 0 4px; background: #454d59; padding: 6px 0 0 4px; }
.handle i { display: block; width: 4px; height: 47px; background: repeating-linear-gradient(transparent 0 1px, #454d59 1px 3px), linear-gradient(#1f242a 0 58%, #d8d878 58%, #8fd0a0 80%, #6fd8d0); }

/* bottom */
.row3 { height: 35px; width: 988px; padding-top: 1px; border-top: 1px solid #7f7f7f; border-right: 1px solid #e2e2e2; border-bottom: 1px solid #e2e2e2;
  grid-template-columns: 9px 101px 34px 50px 24px 34px 34px 28px 38px 20px 40px 24px 40px 20px 40px 6px 10px 26px 38px 24px 14px 22px 38px 34px 2px 20px 4px 38px 4px 38px 24px 38px 26px 36px 4px 6px; }
.row3 .select { width: 98px; justify-self: start; margin-left: 2px; font-size: 12px; }
.select { height: 20px; border: 1px solid #8f8f8f; display: flex; align-items: center; justify-content: space-between; padding: 0 7px 0 3px; font-size: 11px; background: #fff; }
.select span { white-space: nowrap; }
.flagwrap { width: 24px; height: 24px; background: #dcdcdc; display: flex; }
.flagwrap svg { width: 24px; height: 24px; }
.graytext { font-size: 11px; color: #c4c4c4; white-space: nowrap; justify-self: start; }
.row4 { height: 31px; padding-top: 1px;
  grid-template-columns: 5px 132px 8px 140px 12px 16px 26px 8px 26px 22px 6px 22px 14px 6px 23px 23px 23px 22px 23px 24px 23px 23px 23px 23px 20px; }
.row4 > .select { width: 100%; }
.row4 > .on { height: 23px; }
.row4 > svg, .row4 .on > svg { width: 20px; height: 20px; }
.status { height: 23px; border-top: 2px solid #7f7f7f; background: #fff; padding: 3px 0 0 3px; font-size: 11px; color: #111; white-space: nowrap; -webkit-text-stroke: .25px #111; }
.taskbar { height: 40px; display: flex; align-items: center; border-top: 1px solid #7fb4d8; background: linear-gradient(90deg, #2a84c2 0, #2a86c4 420px, #2b7dbb 560px, #2f7dbd 820px, #1c5c97 940px, #123f72 1280px); position: relative; }
.orb { width: 38px; height: 38px; margin-left: 8px; margin-right: 23px; flex: none; }
.tbi { width: 32px; height: 32px; flex: none; }
.taskbar > .tbi { margin-right: 30px; }
.taskbar > .tbi:nth-of-type(2) { margin-right: 33px; }
.task { display: flex; align-items: center; justify-content: center; width: 58px; height: 38px; margin: 0 18px 0 -14px; flex: none; border: 1px solid #9fd0ea; border-radius: 3px; background: linear-gradient(#5fa8d8, #3b8fc8); }
.task.two { width: 52px; margin-right: 0; margin-left: -14px; background: linear-gradient(#cfe6f5, #7fbde2); }
.tbspace { flex: 1; align-self: stretch; margin: 1px 0 1px 0; position: relative; }
.tbspace::before { content: ""; position: absolute; left: 0; top: 0; bottom: 0; width: 9px; background: #4f9bcf; border: 1px solid #9fd0ea; border-radius: 2px; }
.tray { width: 18px; height: 18px; flex: none; margin-right: 6px; }
.tray.up { width: 0; height: 0; margin: 0 10px 0 27px; border: 5px solid transparent; border-bottom: 6px solid #bcd6ea; border-top: 0; }
.clock { width: 74px; margin-left: 4px; padding-right: 8px; text-align: center; color: #fff; font: 13px/16px "Liberation Sans", sans-serif; white-space: nowrap; flex: none; }
.showdesk { width: 11px; height: 39px; border: 1px solid #5f8db5; flex: none; margin-left: 1px; }

/* watermark */
.watermark { position: absolute; left: 980px; top: 921px; width: 300px; height: 106px; display: flex; opacity: .96; pointer-events: none; }
.wmhex { width: 84px; height: 106px; flex: none; }
.wmtext { display: flex; flex-direction: column; margin-left: 9px; padding-top: 16px; }
.wmbig { font: 700 47px/50px "Noto Sans CJK SC", sans-serif; color: #74c0ec; white-space: nowrap; }
.wmurl { font: 700 19.500px/20px "DejaVu Sans", sans-serif; color: #e9f5fb; -webkit-text-stroke: 1px #5ba8dc; white-space: nowrap; letter-spacing: -.2px; }
```
